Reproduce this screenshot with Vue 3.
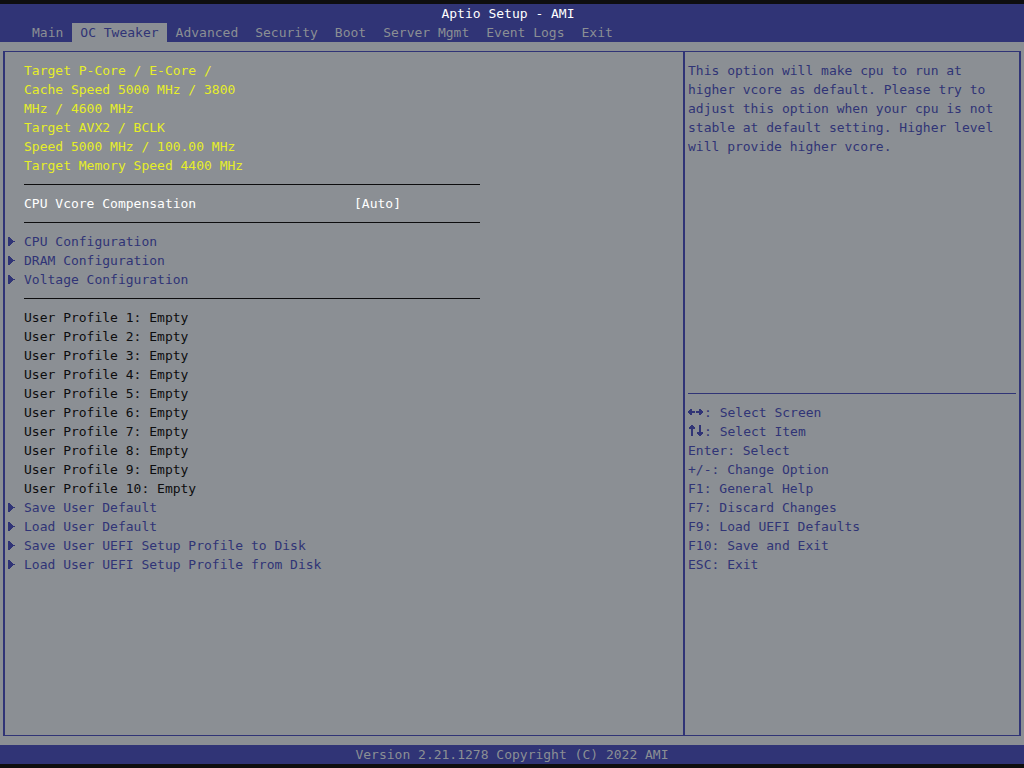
<script setup>
import { ref } from 'vue'

const tabs = ['Main', 'OC Tweaker', 'Advanced', 'Security', 'Boot', 'Server Mgmt', 'Event Logs', 'Exit']
const activeTab = ref('OC Tweaker')

const targets = [
  'Target P-Core / E-Core /',
  'Cache Speed 5000 MHz / 3800',
  'MHz / 4600 MHz',
  'Target AVX2 / BCLK',
  'Speed 5000 MHz / 100.00 MHz',
  'Target Memory Speed 4400 MHz',
]

const compensation = ref('[Auto]')
const menus = ['CPU Configuration', 'DRAM Configuration', 'Voltage Configuration']
const profileCount = 10
const profileMenus = [
  'Save User Default',
  'Load User Default',
  'Save User UEFI Setup Profile to Disk',
  'Load User UEFI Setup Profile from Disk',
]

const keys = [
  'Enter: Select',
  '+/-: Change Option',
  'F1: General Help',
  'F7: Discard Changes',
  'F9: Load UEFI Defaults',
  'F10: Save and Exit',
  'ESC: Exit',
]
</script>

<template>
  <div class="screen">
    <header class="top">
      <h1 class="title">Aptio Setup - AMI</h1>
      <nav class="tabs">
        <button
          v-for="tab in tabs"
          :key="tab"
          type="button"
          class="tab"
          :class="{ active: tab === activeTab }"
          @click="activeTab = tab"
        >{{ tab }}</button>
      </nav>
    </header>

    <div class="body">
      <div class="frame">
        <main class="settings">
          <p v-for="line in targets" :key="line" class="target">{{ line }}</p>
          <hr class="rule" />
          <div class="option">
            <label for="vcore">CPU Vcore Compensation</label>
            <select id="vcore" v-model="compensation" class="value">
              <option>[Auto]</option>
            </select>
          </div>
          <hr class="rule" />
          <a v-for="item in menus" :key="item" href="#" class="menu">
            <svg class="marker" viewBox="0 0 7 9" width="7" height="9" shape-rendering="crispEdges" aria-hidden="true">
              <path d="M0 0h2v1h1v1h1v1h1v1h2v1h-2v1h-1v1h-1v1h-1v1h-2z" />
            </svg>{{ item }}
          </a>
          <hr class="rule" />
          <p v-for="n in profileCount" :key="n" class="profile">User Profile {{ n }}: Empty</p>
          <a v-for="item in profileMenus" :key="item" href="#" class="menu">
            <svg class="marker" viewBox="0 0 7 9" width="7" height="9" shape-rendering="crispEdges" aria-hidden="true">
              <path d="M0 0h2v1h1v1h1v1h1v1h2v1h-2v1h-1v1h-1v1h-1v1h-2z" />
            </svg>{{ item }}
          </a>
        </main>

        <aside class="side">
          <p class="help">
            This option will make cpu to run at higher vcore as default. Please try to adjust this
            option when your cpu is not stable at default setting. Higher level will provide higher vcore.
          </p>
          <hr class="rule" />
          <ul class="keys">
            <li class="arrow-row">
              <svg class="arrows" viewBox="0 0 16 19" width="16" height="19" shape-rendering="crispEdges" aria-label="Left and right">
                <path d="M0 8h1v-1h1v-1h2v2h3v2h-3v2h-2v-1h-1v-1h-1zM15 8h-1v-1h-1v-1h-2v2h-3v2h3v2h2v-1h1v-1h1z" />
              </svg>: Select Screen
            </li>
            <li class="arrow-row">
              <svg class="arrows" viewBox="0 0 16 19" width="16" height="19" shape-rendering="crispEdges" aria-label="Up and down">
                <path d="M3 3h2v1h1v1h1v2h-2v7h-2v-7h-2v-2h1v-1h1zM11 3h2v7h2v2h-1v1h-1v1h-2v-1h-1v-1h-1v-2h2z" />
              </svg>: Select Item
            </li>
            <li v-for="key in keys" :key="key">{{ key }}</li>
          </ul>
        </aside>
      </div>
    </div>

    <footer class="version">Version 2.21.1278 Copyright (C) 2022 AMI</footer>
  </div>
</template>

<style>
html,
body {
  background: #0e0e0f;
}
</style>

<style scoped>
.screen {
  --navy: #303476;
  --gray: #8b8f94;
  --ink: #0d0d0e;
  box-sizing: border-box;
  min-height: 100vh;
  display: flex;
  flex-direction: column;
  padding: 4px 0;
  background: #0e0e0f;
  color: var(--navy);
  font-family: "DejaVu Sans Mono", "Liberation Mono", monospace;
  font-size: 13px;
  line-height: 19px;
}

.top {
  background: var(--navy);
  color: var(--gray);
}

.title {
  margin: 0;
  padding-right: 8px;
  color: #fff;
  font-size: 13px;
  font-weight: 400;
  text-align: center;
}

.tabs {
  display: flex;
  gap: 1px;
  padding: 0 24px;
}

.tab {
  padding: 0 8px;
  border: 0;
  background: none;
  color: inherit;
  font: inherit;
  white-space: pre;
}

.tab.active {
  background: var(--gray);
  color: var(--navy);
}

.body {
  flex: 1;
  display: flex;
  padding: 9px 3px;
  background: var(--gray);
}

.frame {
  flex: 1;
  display: grid;
  grid-template-columns: 1fr 338px;
  border: solid var(--navy);
  border-width: 1px 0 1px 2px;
}

.settings {
  padding: 9px 19px;
}

.side {
  padding: 9px 3px;
  border: solid var(--navy);
  border-width: 0 2px;
}

p {
  margin: 0;
}

.target {
  color: #e6ee28;
}

.rule {
  height: 1px;
  margin: 9px 0;
  border: 0;
  background: var(--ink);
}

.settings .rule {
  max-width: 456px;
}

.side .rule {
  background: var(--navy);
}

.option {
  display: grid;
  grid-template-columns: 330px 1fr;
  color: #fff;
}

.value {
  justify-self: start;
  height: 19px;
  padding: 0;
  border: 0;
  appearance: none;
  background: none;
  color: inherit;
  font: inherit;
}

.menu {
  position: relative;
  display: block;
  color: inherit;
  text-decoration: none;
}

.marker {
  position: absolute;
  left: -16px;
  top: 5px;
  fill: currentColor;
}

.profile {
  color: var(--ink);
}

.help {
  min-height: 323px;
}

.keys {
  margin: 0;
  padding: 0;
  list-style: none;
}

.arrow-row {
  display: flex;
}

.arrows {
  fill: currentColor;
}

.version {
  background: var(--navy);
  color: var(--gray);
  text-align: center;
}
</style>
